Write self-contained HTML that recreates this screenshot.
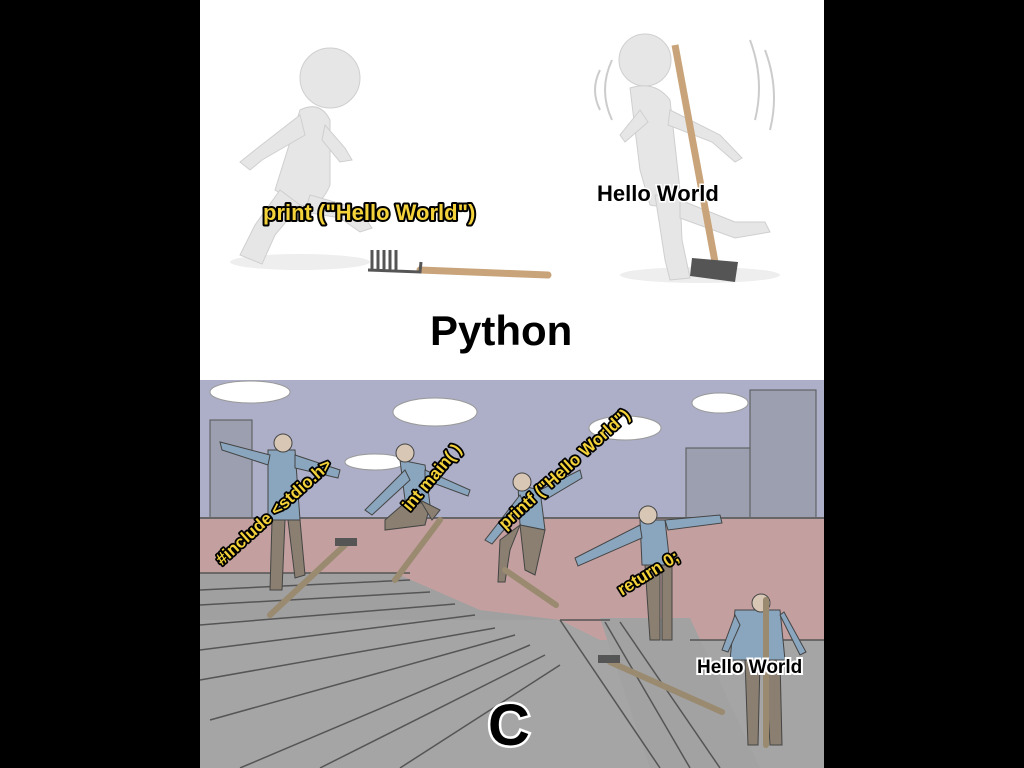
<!DOCTYPE html>
<html><head><meta charset="utf-8"><style>
html,body{margin:0;padding:0;background:#000;width:1024px;height:768px;overflow:hidden}
svg{display:block}
text{font-family:"Liberation Sans","DejaVu Sans",sans-serif;font-weight:bold}
</style></head><body>
<svg width="1024" height="768" viewBox="0 0 1024 768" xmlns="http://www.w3.org/2000/svg">
<rect width="1024" height="768" fill="#000"/>
<rect x="200" y="0" width="624" height="380" fill="#fff"/>
<ellipse cx="300" cy="262" rx="70" ry="8" fill="#eee"/>
<ellipse cx="700" cy="275" rx="80" ry="8" fill="#eee"/>
<g fill="#e6e6e6" stroke="#cfcfcf">
<circle cx="330" cy="78" r="30"/>
<path d="M300 110 Q320 100 330 120 L330 185 Q320 210 300 205 L275 190 Z"/>
<path d="M300 115 L255 150 L240 162 L250 170 L262 160 L305 135 Z"/>
<path d="M325 125 L345 148 L352 160 L340 162 L322 140 Z"/>
<path d="M280 190 L255 225 L240 255 L262 264 L275 235 L300 205 Z"/>
<path d="M310 195 L345 205 L365 218 L372 228 L360 232 L340 218 L305 212 Z"/>
</g>
<line x1="420" y1="270" x2="548" y2="275" stroke="#c9a47a" stroke-width="7" stroke-linecap="round"/>
<path d="M368 270 L420 272 L421 262 M372 270 L372 250 M378 270 L378 250 M384 270 L384 250 M390 270 L390 250 M396 270 L396 250" stroke="#555" stroke-width="3" fill="none"/>
<g fill="#e6e6e6" stroke="#cfcfcf">
<circle cx="645" cy="60" r="26"/>
<path d="M630 88 Q655 80 670 100 L680 190 Q670 210 650 205 L640 170 Z"/>
<path d="M640 110 L620 135 L625 142 L648 122 Z"/>
<path d="M670 110 L720 135 L742 158 L735 162 L712 142 L668 125 Z"/>
<path d="M655 195 L665 260 L670 280 L690 278 L682 240 L680 195 Z"/>
<path d="M680 200 L735 222 L765 222 L770 232 L735 238 L680 218 Z"/>
</g>
<line x1="675" y1="45" x2="715" y2="262" stroke="#c9a47a" stroke-width="7"/>
<path d="M692 258 L738 262 L735 282 L690 276 Z" fill="#555"/>
<path d="M600 70 Q590 90 600 110 M612 60 Q598 90 612 120 M750 40 Q765 80 755 120 M765 50 Q780 90 770 130" stroke="#ccc" stroke-width="2" fill="none"/>
<text x="263" y="220" font-size="22" fill="#f3d23a" stroke="#000" stroke-width="4" paint-order="stroke" stroke-linejoin="round" font-family="DejaVu Sans">print ("Hello World")</text>
<text x="597" y="201" font-size="22" fill="#000" stroke="#fff" stroke-width="3" paint-order="stroke">Hello World</text>
<text x="430" y="345" font-size="42" fill="#000" font-family="DejaVu Sans">Python</text>

<rect x="200" y="380" width="624" height="388" fill="#acafc7"/>
<g fill="#fff" stroke="#999">
<ellipse cx="250" cy="392" rx="40" ry="11"/>
<ellipse cx="435" cy="412" rx="42" ry="14"/>
<ellipse cx="625" cy="428" rx="36" ry="12"/>
<ellipse cx="720" cy="403" rx="28" ry="10"/>
<ellipse cx="375" cy="462" rx="30" ry="8"/>
<ellipse cx="710" cy="482" rx="20" ry="8"/>
</g>
<rect x="210" y="420" width="42" height="100" fill="#9c9fb0" stroke="#555"/>
<rect x="686" y="448" width="72" height="70" fill="#9c9fb0" stroke="#555"/>
<rect x="750" y="390" width="66" height="128" fill="#9c9fb0" stroke="#555"/>
<rect x="200" y="517" width="624" height="135" fill="#c3a09f"/>
<line x1="200" y1="518" x2="824" y2="518" stroke="#666" stroke-width="2"/>
<polygon points="200,573 395,573 480,610 560,620 200,660" fill="#a0a0a0"/>
<polygon points="200,620 560,620 600,640 824,640 824,768 200,768" fill="#a5a5a5"/>
<polygon points="600,618 690,618 760,768 650,768" fill="#a2a2a2"/>
<g stroke="#555" stroke-width="1.5">
<line x1="200" y1="590" x2="410" y2="580"/><line x1="200" y1="605" x2="430" y2="592"/>
<line x1="200" y1="625" x2="455" y2="604"/><line x1="200" y1="650" x2="475" y2="615"/>
<line x1="200" y1="680" x2="495" y2="628"/><line x1="210" y1="720" x2="515" y2="635"/>
<line x1="240" y1="768" x2="530" y2="645"/><line x1="320" y1="768" x2="545" y2="655"/>
<line x1="400" y1="768" x2="560" y2="665"/><line x1="560" y1="620" x2="660" y2="768"/>
<line x1="605" y1="622" x2="690" y2="768"/><line x1="620" y1="622" x2="720" y2="768"/>
<line x1="200" y1="573" x2="410" y2="573"/><line x1="560" y1="620" x2="610" y2="620"/>
<line x1="690" y1="640" x2="824" y2="640"/>
</g>
<g>
<g fill="#8aa6bf" stroke="#444">
<path d="M268 450 L295 450 L300 520 L268 520 Z"/><path d="M270 455 L220 442 L222 450 L268 465 Z"/><path d="M295 455 L340 470 L338 478 L295 468 Z"/>
<path d="M400 460 L425 465 L430 505 L405 500 Z"/><path d="M405 470 L365 510 L372 515 L410 480 Z"/><path d="M425 470 L470 490 L468 496 L425 480 Z"/>
<path d="M518 485 L540 490 L545 530 L520 525 Z"/><path d="M520 495 L485 540 L492 544 L525 505 Z"/><path d="M540 490 L580 470 L582 478 L545 500 Z"/>
<path d="M640 520 L665 520 L670 565 L642 565 Z"/><path d="M640 525 L575 558 L578 566 L642 538 Z"/><path d="M665 520 L720 515 L722 523 L668 530 Z"/>
<path d="M735 610 L780 610 L785 660 L730 660 Z"/><path d="M735 615 L722 650 L728 652 L740 625 Z"/><path d="M780 615 L800 655 L806 652 L784 612 Z"/>
</g>
<g fill="#8a7f70" stroke="#444">
<path d="M272 520 L285 520 L282 590 L270 590 Z"/><path d="M288 520 L300 520 L305 575 L295 578 Z"/>
<path d="M408 500 L430 505 L425 525 L385 530 L385 520 Z"/><path d="M420 500 L440 510 L432 520 Z"/>
<path d="M520 525 L545 530 L535 575 L525 570 Z"/><path d="M520 525 L500 540 L498 582 L505 582 L510 550 Z"/>
<path d="M645 565 L660 565 L660 640 L650 640 Z"/><path d="M662 565 L672 565 L672 640 L662 640 Z"/>
<path d="M745 660 L760 660 L758 745 L748 745 Z"/><path d="M765 660 L780 660 L782 745 L770 745 Z"/>
</g>
<g fill="#d8c7b5" stroke="#444">
<circle cx="283" cy="443" r="9"/><circle cx="405" cy="453" r="9"/><circle cx="522" cy="482" r="9"/><circle cx="648" cy="515" r="9"/><circle cx="761" cy="603" r="9"/>
</g>
</g>
<g stroke="#9a8a70" stroke-width="6" stroke-linecap="round">
<line x1="270" y1="615" x2="345" y2="545"/><line x1="395" y1="580" x2="440" y2="520"/>
<line x1="505" y1="570" x2="556" y2="605"/><line x1="610" y1="662" x2="722" y2="712"/>
<line x1="766" y1="600" x2="766" y2="745"/>
</g>
<g fill="#555"><rect x="335" y="538" width="22" height="8"/><rect x="598" y="655" width="22" height="8"/></g>
<g font-family="DejaVu Sans" font-size="17" fill="#f3d23a" stroke="#000" stroke-width="3.5" paint-order="stroke" stroke-linejoin="round">
<text transform="translate(222,566) rotate(-42)">#include &lt;stdio.h&gt;</text>
<text transform="translate(410,512) rotate(-50)">int main( )</text>
<text transform="translate(505,530) rotate(-42)">printf ("Hello World")</text>
<text transform="translate(622,596) rotate(-32)">return 0;</text>
</g>
<text x="697" y="673" font-size="19" fill="#000" stroke="#fff" stroke-width="4" paint-order="stroke">Hello World</text>
<text x="488" y="745" font-size="58" fill="#000" stroke="#fff" stroke-width="5" paint-order="stroke" font-family="DejaVu Sans">C</text>
</svg>
</body></html>
